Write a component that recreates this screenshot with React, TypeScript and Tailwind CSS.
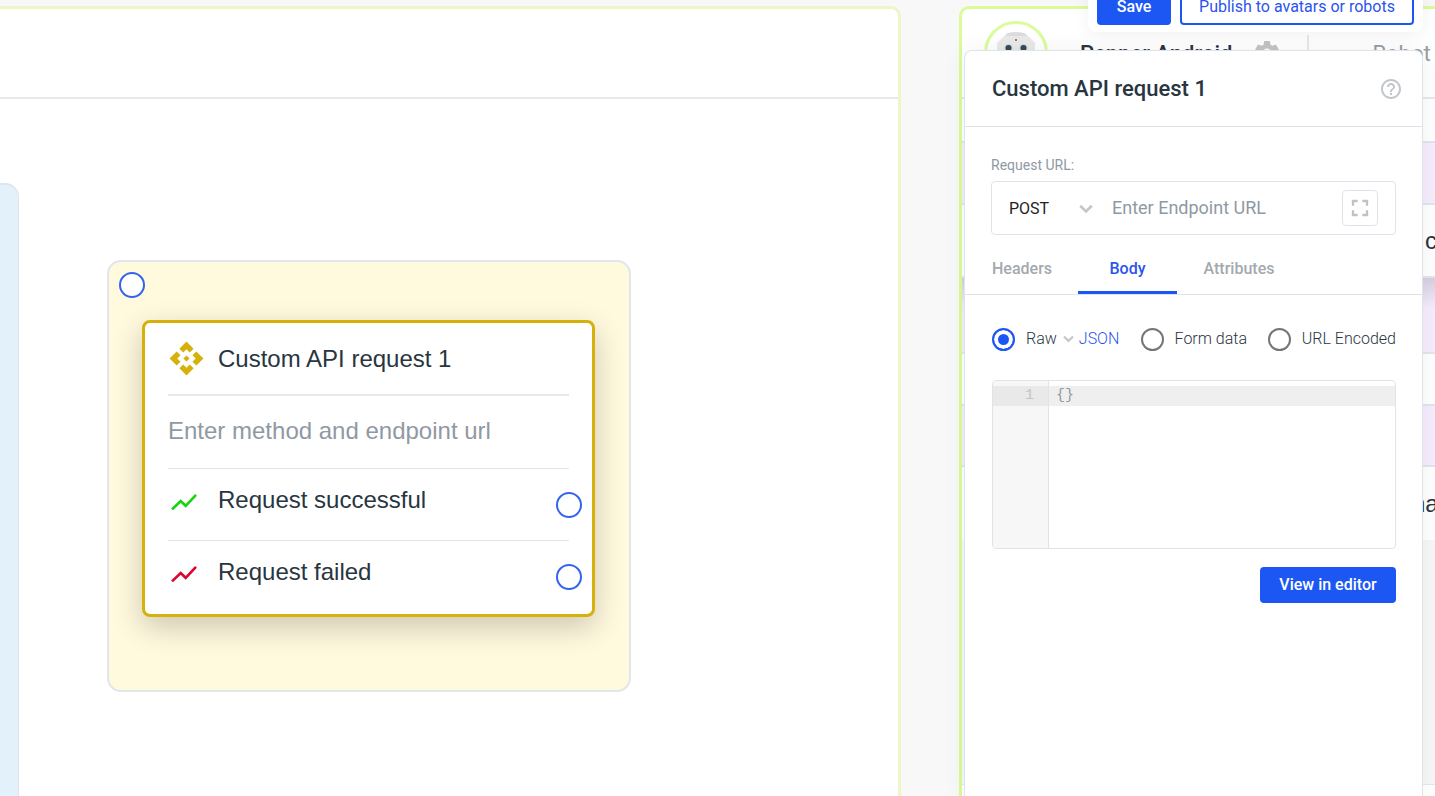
import { useState } from 'react';
import { MdApi, MdFullscreen, MdHelpOutline, MdSettings } from 'react-icons/md';

type Tab = 'Headers' | 'Body' | 'Attributes';

const TABS: { name: Tab; width: string }[] = [
  { name: 'Headers', width: 'w-[86px] pr-[27px]' },
  { name: 'Body', width: 'w-[99px]' },
  { name: 'Attributes', width: 'w-[124px]' },
];

// rows of the robot board, most of them are hidden behind the settings panel
const BOARD_ROWS = [
  { className: 'h-[44px] bg-white', text: '' },
  { className: 'h-[62px] bg-[#f5edfe]', text: '' },
  { className: 'h-[73px] bg-white', text: 'c' },
  { className: 'h-[76px] bg-[#f5edfe] bg-linear-to-b from-[#d6cfdf] to-[#f5edfe] to-40%', text: '' },
  { className: 'h-[52px] bg-white', text: '' },
  { className: 'h-[61px] bg-[#f5edfe]', text: '' },
];

function Chevron({ className }: { className?: string }) {
  return (
    <svg viewBox="0 0 14 10" className={className} fill="none" stroke="#c4c7cb" strokeWidth="2.8">
      <path d="M1.2 1.8 7 7.4l5.8-5.6" />
    </svg>
  );
}

function TrendIcon({ color }: { color: string }) {
  return (
    <svg viewBox="0 0 26 18" className="w-[26px] h-[18px] ml-[3px]" fill="none" stroke={color} strokeWidth="2.6">
      <path d="M1 16.4 9.7 8l5 4.8L25 1.8" />
    </svg>
  );
}

function Port({ className, label }: { className: string; label: string }) {
  return (
    <button
      aria-label={label}
      className={`absolute size-[26px] rounded-full bg-white border-2 border-[#3363f0] ${className}`}
    />
  );
}

function RobotAvatar() {
  return (
    <div className="size-[64px] rounded-full border-[3px] border-[#dbfc9c] bg-white overflow-hidden">
      <svg viewBox="0 0 58 58" className="size-full">
        <path d="M20 9.5Q29 7 38 9.500 44 14 48 19v12q-2 12-19 14Q12 43 10 31V19q5-5 10-9.500z" fill="#e9e9ea" />
        <path d="M20 9.500q9-2.500 18 0l2 2.500H18z" fill="#dcdcdd" />
        <circle cx="29" cy="16" r="0.900" fill="#8b3a3a" />
        <circle cx="21.500" cy="24" r="4.200" fill="#b5e3e6" />
        <circle cx="36.500" cy="24" r="4.200" fill="#b5e3e6" />
        <circle cx="21.500" cy="24" r="3" fill="#3d474d" />
        <circle cx="36.500" cy="24" r="3" fill="#3d474d" />
      </svg>
    </div>
  );
}

function ApiNode() {
  return (
    <div className="absolute left-[107px] top-[251px] w-[524px] h-[432px] rounded-[14px] border-2 border-[#e1e5ec] bg-[#fff9de] pl-[33px] pr-[34px] pt-[58px]">
      <Port className="left-[10px] top-[10px]" label="Node input" />
      <div className="rounded-lg border-[3px] border-[#d6b10c] bg-white px-[23px] text-[24px] text-[#29353f] shadow-[0_10px_30px_rgba(0,0,0,0.2)] font-['Liberation_Sans',Arial,sans-serif]">
        <div className="flex items-center h-[73px] border-b-2 border-[#e4e9ee]">
          <MdApi className="size-[37px] text-[#d6b10c]" />
          <span className="ml-[13px]">Custom API request 1</span>
        </div>
        <div className="flex items-center h-[73px] pb-[2px] border-b border-[#dfe5ec] text-[#8f99a3]">
          Enter method and endpoint url
        </div>
        <div className="relative flex items-start h-[72px] pt-[13px] border-b border-[#dfe5ec]">
          <div className="w-[50px] pt-[11px]">
            <TrendIcon color="#16d60b" />
          </div>
          <span>Request successful</span>
          <Port className="-right-[13px] top-[23px]" label="Request successful output" />
        </div>
        <div className="relative flex items-start h-[73px] pt-[13px]">
          <div className="w-[50px] pt-[11px]">
            <TrendIcon color="#dc0530" />
          </div>
          <span>Request failed</span>
          <Port className="-right-[13px] top-[23px]" label="Request failed output" />
        </div>
      </div>
    </div>
  );
}

function RobotBoard() {
  return (
    <section className="w-[476px] shrink-0 overflow-hidden flex flex-col rounded-tl-[10px] border-t-[3px] border-l-[3px] border-[#dafb98] bg-[#f7f7f7]">
      <div className="flex items-center shrink-0 h-[90px] pl-[22px] border-b-2 border-[#e4e9ee] bg-white whitespace-nowrap text-[22px]">
        <RobotAvatar />
        <span className="ml-[32px] font-medium text-[#29353f]">Pepper Android</span>
        <MdSettings className="ml-5 size-[30px] shrink-0 text-[#c4c4c4]" />
        <span className="ml-[25px] h-[36px] border-l-2 border-[#e4e9ee]" />
        <span className="ml-[63px] text-[#9a9ea3]">Robot</span>
      </div>
      {BOARD_ROWS.map((row, i) => (
        <div
          key={i}
          className={`flex items-center shrink-0 pl-[463px] border-b-2 border-[#e1e5ec] text-[24px] text-[#29353f] font-['Liberation_Sans',Arial,sans-serif] ${row.className}`}
        >
          {row.text}
        </div>
      ))}
      <div className="flex items-center shrink-0 h-[73px] pl-[450px] bg-white text-[24px] text-[#29353f] font-['Liberation_Sans',Arial,sans-serif]">
        na
      </div>
      <div className="h-[244px] shrink-0" />
      <div className="flex-1 border-t border-[#e4e9ee] bg-white" />
    </section>
  );
}

function Toolbar() {
  return (
    <div className="absolute right-3 -top-5 flex gap-[9px] px-[9px] pt-[9px] pb-[7px] rounded-lg bg-white shadow-[0_2px_16px_rgba(0,0,0,0.06)]">
      <button className="h-9 w-[74px] rounded-[4px] bg-[#1c57f4] text-white font-medium">Save</button>
      <button className="h-9 w-[234px] rounded-[4px] border-2 border-[#1c57f4] bg-white text-[#2b54ee]">
        Publish to avatars or robots
      </button>
    </div>
  );
}

function SettingsPanel() {
  const [tab, setTab] = useState<Tab>('Body');
  const [format, setFormat] = useState('raw');
  const [body, setBody] = useState('{}');

  const radioClass =
    'appearance-none size-[23px] rounded-full border-2 border-[#757575] bg-white checked:border-[#1c57f4] checked:bg-[#1c57f4] checked:shadow-[inset_0_0_0_4px_white]';

  return (
    <aside className="absolute right-3 top-[50px] bottom-0 w-[459px] rounded-t-lg border border-b-0 border-[#dfe4eb] bg-white shadow-[0_0_24px_rgba(0,0,0,0.06)]">
      <header className="flex items-center justify-between h-[76px] pl-[27px] pr-[19px] border-b border-[#e0e4ea]">
        <h2 className="text-[22px] font-medium text-[#29353f]">Custom API request 1</h2>
        <button aria-label="Help">
          <MdHelpOutline className="size-6 text-[#c2c5c9]" />
        </button>
      </header>

      <div className="px-[26px] pt-7">
        <label htmlFor="endpoint" className="block text-sm text-[#8f99a3]">
          Request URL:
        </label>
        <div className="mt-[6px] flex items-center h-[54px] px-[17px] rounded-[4px] border border-[#e0e4ea]">
          <div className="relative w-[84px]">
            <select aria-label="Method" className="appearance-none w-full bg-transparent pt-px text-[#1d2226]">
              <option>POST</option>
              <option>GET</option>
            </select>
            <Chevron className="absolute right-0 top-2 w-[14px] h-[10px] pointer-events-none" />
          </div>
          <input
            id="endpoint"
            placeholder="Enter Endpoint URL"
            className="ml-[19px] pb-[2px] flex-1 min-w-0 text-[18px] outline-none placeholder:text-[#8f99a3]"
          />
          <button
            aria-label="Expand"
            className="flex items-center justify-center size-9 rounded-[4px] border border-[#e0e4ea]"
          >
            <MdFullscreen className="size-7 shrink-0 text-[#c2c2c2]" />
          </button>
        </div>
      </div>

      <nav className="flex h-[60px] pl-[27px] border-b border-[#e0e4ea]">
        {TABS.map(({ name, width }) => (
          <button
            key={name}
            onClick={() => setTab(name)}
            className={`${width} pt-[11px] font-medium border-b-[3px] ${
              tab === name ? 'border-[#1c57f4] text-[#2b54ee]' : 'border-transparent text-[#a3a9af]'
            }`}
          >
            {name}
          </button>
        ))}
      </nav>

      <div className="pl-[27px] pr-[26px] pt-8">
        <div className="flex items-center justify-between font-light text-[#29353f]">
          <div className="flex items-center">
            <label className="flex items-center gap-[11px]">
              <input type="radio" name="format" checked={format === 'raw'} onChange={() => setFormat('raw')} className={radioClass} />
              Raw
            </label>
            <Chevron className="ml-[6px] w-[11px] h-2" />
            <select aria-label="Raw format" className="ml-[5px] appearance-none text-[#2b54ee]">
              <option>JSON</option>
            </select>
          </div>
          <label className="flex items-center gap-[11px]">
            <input type="radio" name="format" checked={format === 'form'} onChange={() => setFormat('form')} className={radioClass} />
            Form data
          </label>
          <label className="flex items-center gap-[11px]">
            <input type="radio" name="format" checked={format === 'url'} onChange={() => setFormat('url')} className={radioClass} />
            URL Encoded
          </label>
        </div>

        <div className="mt-[29px] flex h-[169px] rounded-[4px] border border-[#dfe4eb] overflow-hidden text-[15px] leading-5 font-['Liberation_Mono',monospace]">
          <div className="w-[56px] pt-[5px] border-r border-[#dfe4eb] bg-[#f7f7f7] text-right text-[#c0c4c8]">
            <div className="pr-[14px] bg-[#e9e9e9]">1</div>
          </div>
          <textarea
            aria-label="Request body"
            value={body}
            onChange={(e) => setBody(e.target.value)}
            className="flex-1 pt-[5px] pl-[7px] resize-none outline-none text-[#8f99a3] bg-[linear-gradient(#efefef,#efefef)] bg-[length:100%_20px] bg-[position:0_5px] bg-no-repeat"
          />
        </div>

        <div className="mt-[18px] flex justify-end">
          <button className="h-9 w-[136px] rounded-[4px] bg-[#1c57f4] text-white font-medium">View in editor</button>
        </div>
      </div>
    </aside>
  );
}

export default function App() {
  return (
    <main className="relative h-screen overflow-hidden bg-[#f8f8f8] font-[Roboto,sans-serif] text-base">
      <div className="flex gap-[58px] h-full pt-[6px]">
        <section className="relative flex-1 rounded-tr-[10px] border-t-[3px] border-r-[3px] border-[#eff5c9] bg-white">
          <div className="h-[90px] border-b-2 border-[#e4e9ee]" />
          <div className="absolute left-0 bottom-0 top-[174px] w-[19px] rounded-tr-[14px] border-t-2 border-r border-[#dfe4ea] bg-[#e3f1fb]" />
          <ApiNode />
        </section>
        <RobotBoard />
      </div>
      <SettingsPanel />
      <Toolbar />
    </main>
  );
}
